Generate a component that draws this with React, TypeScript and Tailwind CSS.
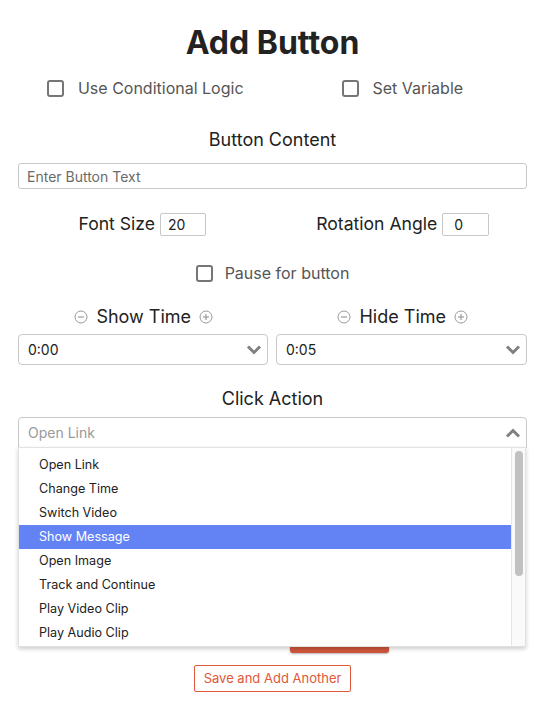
import React from "react";

function Checkbox() {
  return <span className="inline-block w-[17px] h-[17px] border-2 border-[#767676] rounded-[3px] bg-white shrink-0" />;
}

function CircleIcon({ plus }: { plus?: boolean }) {
  return (
    <svg width="14" height="14" viewBox="0 0 14 14" className="shrink-0">
      <circle cx="7" cy="7" r="6" fill="none" stroke="#9a9a9a" strokeWidth="1" />
      <line x1="4" y1="7" x2="10" y2="7" stroke="#9a9a9a" strokeWidth="1.2" />
      {plus && <line x1="7" y1="4" x2="7" y2="10" stroke="#9a9a9a" strokeWidth="1.2" />}
    </svg>
  );
}

function Chevron({ up }: { up?: boolean }) {
  return (
    <svg width="16" height="10" viewBox="0 0 16 10" className="shrink-0">
      <polyline
        points={up ? "2,8.5 8,2.5 14,8.5" : "2,1.5 8,7.5 14,1.5"}
        fill="none"
        stroke="#808080"
        strokeWidth="3"
        strokeLinejoin="miter"
      />
    </svg>
  );
}

const items = [
  "Open Link",
  "Change Time",
  "Switch Video",
  "Show Message",
  "Open Image",
  "Track and Continue",
  "Play Video Clip",
  "Play Audio Clip",
];

export default function App() {
  return (
    <div className="relative w-[547px] h-[709px] bg-white pl-[18px] pr-[20px] font-['Inter',sans-serif] text-[#222] overflow-hidden">
      <h1 className="pt-[23px] text-center text-[32px] leading-[40px] font-bold text-[#222]">Add Button</h1>

      <div className="ml-[-6px] w-[521px] grid grid-cols-2 mt-[13px] h-[24px]">
        <label className="pl-[6px] flex items-center justify-center gap-[14px] text-[16px] text-[#555]">
          <Checkbox />
          <span>Use Conditional Logic</span>
        </label>
        <label className="flex items-center justify-center gap-[13px] text-[16px] text-[#555]">
          <Checkbox />
          <span>Set Variable</span>
        </label>
      </div>

      <div className="mt-[28px] text-center text-[18px] leading-[24px] text-[#222]">Button Content</div>
      <div className="mt-[11px] h-[26px] border border-[#c8c8c8] rounded-[3px] flex items-center px-[8px] text-[14px] text-[#6b6b6b]">
        Enter Button Text
      </div>

      <div className="ml-[-6px] w-[521px] grid grid-cols-2 mt-[22px] h-[24px]">
        <div className="flex items-center justify-center gap-[5px] text-[17.6px] text-[#222]">
          <span>Font Size</span>
          <span className="w-[46px] h-[23px] border border-[#c8c8c8] rounded-[2px] flex items-center px-[7px] text-[14px]">20</span>
        </div>
        <div className="flex items-center justify-center gap-[5px] text-[17.6px] text-[#222]">
          <span>Rotation Angle</span>
          <span className="w-[47px] h-[23px] border border-[#c8c8c8] rounded-[2px] flex items-center px-[11px] text-[14px]">0</span>
        </div>
      </div>

      <div className="mt-[26px] h-[24px] flex items-center justify-center gap-[12px] text-[16px] text-[#555]">
        <Checkbox />
        <span>Pause for button</span>
      </div>

      <div className="ml-[-6px] w-[521px] grid grid-cols-2 mt-[18px] h-[24px]">
        <div className="pl-[3px] flex items-center justify-center gap-[8px] text-[18px] text-[#222]">
          <CircleIcon />
          <span>Show Time</span>
          <CircleIcon plus />
        </div>
        <div className="flex items-center justify-center gap-[8px] text-[18px] text-[#222]">
          <CircleIcon />
          <span>Hide Time</span>
          <CircleIcon plus />
        </div>
      </div>

      <div className="mt-[7px] flex gap-[8px]">
        <div className="w-[250px] h-[31px] border border-[#c8c8c8] rounded-[4px] flex items-center justify-between pl-[9px] pr-[5px] text-[14px] text-[#222]">
          <span>0:00</span>
          <Chevron />
        </div>
        <div className="flex-1 h-[31px] border border-[#c8c8c8] rounded-[4px] flex items-center justify-between pl-[9px] pr-[5px] text-[14px] text-[#222]">
          <span>0:05</span>
          <Chevron />
        </div>
      </div>

      <div className="mt-[22px] text-center text-[18px] leading-[24px] text-[#222]">Click Action</div>
      <div className="mt-[6px] h-[31px] border border-[#c8c8c8] rounded-t-[4px] flex items-center justify-between pl-[9px] pr-[5px] text-[14px] text-[#9a9a9a]">
        <span>Open Link</span>
        <Chevron up />
      </div>

      <div className="mt-[171px] flex justify-center">
        <div className="ml-[134px] w-[99px] h-[34px] rounded-[3px] bg-[#cf553a] shadow-[0_1px_2px_rgba(0,0,0,0.3)] text-white text-[14px] flex items-center justify-center">Save</div>
      </div>
      <div className="mt-[12px] flex justify-center">
        <div className="w-[157px] h-[27px] border border-[#e0573a] rounded-[2px] text-[#e0573a] text-[13px] flex items-center justify-center">
          Save and Add Another
        </div>
      </div>

      <div className="absolute left-[18px] top-[447px] w-[508px] h-[200px] bg-white border border-[#e2e2e2] shadow-[0_2px_4px_rgba(0,0,0,0.2)] flex">
        <div className="flex-1 pt-[5px] overflow-hidden">
          {items.map((t) => (
            <div
              key={t}
              className={
                t === "Show Message"
                  ? "h-[24px] flex items-center pl-[20px] text-[12.6px] bg-[#6383f5] text-white"
                  : "h-[24px] flex items-center pl-[20px] text-[12.6px] text-[#222]"
              }
            >
              {t}
            </div>
          ))}
        </div>
        <div className="w-[14px] bg-[#fafafa] border-l border-[#e6e6e6] pt-[3px] flex justify-center">
          <div className="w-[8px] h-[125px] rounded-full bg-[#c1c1c1]" />
        </div>
      </div>
    </div>
  );
}
